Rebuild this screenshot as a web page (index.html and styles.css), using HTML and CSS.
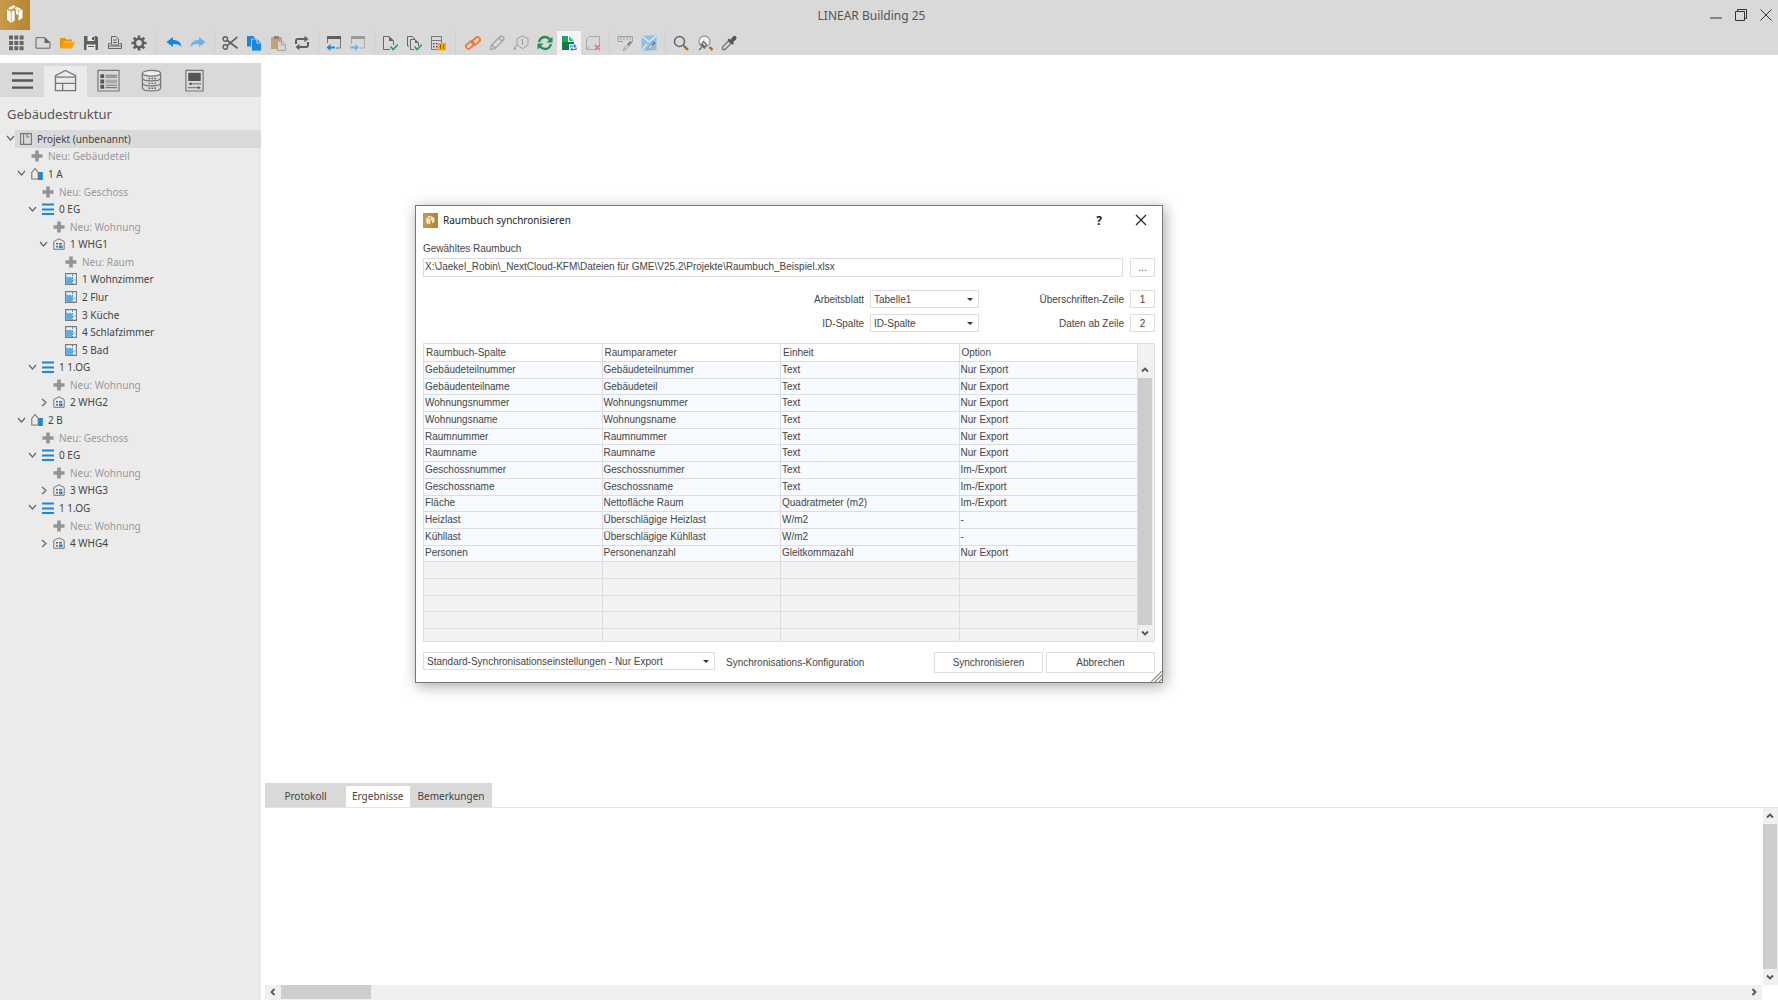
FILE: index.html
```html
<!DOCTYPE html>
<html lang="de">
<head>
    <meta charset="utf-8">
    <title>LINEAR Building 25</title>
    <link rel="stylesheet" href="styles.css">
</head>
<body>
    <svg class="symbols" aria-hidden="true">
        <symbol id="logo" viewBox="0 0 30 30">
            <path d="M7 9.500l3.800 2v11.500l-3.800-3.500z M11.600 11.500l3-1.200v10l-3 2.700z M8 8.300l5.500-3 2.500 1.300-5 3.400z M14.500 8.500l2.500-1.500 4.500 2-3 1.800z M18.500 11.500l4-2.200v8.700l-4 2.500z M16 9.800l2 1.200v4l-2-1z" fill="#fff"/>
        </symbol>
        <symbol id="down" viewBox="0 0 9 9"><path d="M1 2l3.500 4L8 2" fill="none" stroke="#666" stroke-width="1.2"/></symbol>
        <symbol id="right" viewBox="0 0 9 9"><path d="M3 1l4 3.500L3 8" fill="none" stroke="#666" stroke-width="1.2"/></symbol>
        <symbol id="plus" viewBox="0 0 12 12"><path d="M4.200.500h3.600v3.700H11.500v3.600H7.800v3.700H4.200V7.800H.5V4.200h3.700z" fill="#949494"/></symbol>
        <symbol id="project" viewBox="0 0 12 12"><path d="M.6.600h3v10.800h-3z M3.600.600h7.800v10.800H3.600 M7 .6v3.400h2.500" fill="none" stroke="#777" stroke-width="1.100"/></symbol>
        <symbol id="building" viewBox="0 0 12 12"><path d="M7 4h4.800v8H7z" fill="#1787e0"/><path d="M.8 11V4.500l3.200-4 3.200 4V11z" fill="#ebebeb" stroke="#777" stroke-width="1.100"/></symbol>
        <symbol id="floor" viewBox="0 0 12 12"><path d="M0 1.500h12M0 6.500h12M0 11h12" stroke="#1787e0" stroke-width="1.800"/></symbol>
        <symbol id="flat" viewBox="0 0 12 12"><path d="M.8 11.300V3.500L6 .8l5.200 2.700v7.800z" fill="none" stroke="#777"/><path d="M3 5h2v1.500H3zM6 5h3v1.500H6zM3 8h2v1.500H3z" fill="#666"/><path d="M6 7.500h3.500v2.700H6z" fill="#1787e0"/></symbol>
        <symbol id="room" viewBox="0 0 12 12"><path d="M.6.600h10.800v10.800H.6z" fill="#f3f6f8" stroke="#777" stroke-width="1.100"/><path d="M1.200 4.500h6v6.300h-6z" fill="#58aaec"/><path d="M7.500 1v10M1 4.300h6.500M7.500 7H11" stroke="#3b9bea" stroke-dasharray="2 1"/></symbol>
        <symbol id="arrow-up" viewBox="0 0 8 8"><path d="M1 5.500l3-3 3 3" fill="none" stroke="#555" stroke-width="1.800"/></symbol>
        <symbol id="arrow-down" viewBox="0 0 8 8"><path d="M1 2.500l3 3 3-3" fill="none" stroke="#555" stroke-width="1.800"/></symbol>
        <symbol id="arrow-left" viewBox="0 0 8 8"><path d="M5.500 1l-3 3 3 3" fill="none" stroke="#555" stroke-width="1.800"/></symbol>
        <symbol id="arrow-right" viewBox="0 0 8 8"><path d="M2.500 1l3 3-3 3" fill="none" stroke="#555" stroke-width="1.800"/></symbol>
    </svg>

    <header>
        <div class="titlebar">
            <svg class="logo"><use href="#logo"/></svg>
            <h1>LINEAR Building 25</h1>
            <button aria-label="Minimieren"><svg viewBox="0 0 12 12"><path d="M0 9h12" stroke="#333"/></svg></button>
            <button aria-label="Wiederherstellen"><svg viewBox="0 0 12 12"><path d="M.5 2.500h9v9h-9z M2.500 2.500v-2h9v9h-2" fill="none" stroke="#333"/></svg></button>
            <button aria-label="Schließen"><svg viewBox="0 0 12 12"><path d="M.5.500l11 11M11.500.500l-11 11" stroke="#333"/></svg></button>
        </div>
        <div class="toolbar">
            <button class="menu" aria-label="Menü"><svg viewBox="0 0 16 16"><path d="M1 .500h4v4H1zM6.300.500h4v4h-4zM11.600.500h4v4h-4zM1 5.900h4v4H1zM6.300 5.900h4v4h-4zM11.600 5.900h4v4h-4zM1 11.300h4v4H1zM6.300 11.300h4v4h-4zM11.600 11.300h4v4h-4z" fill="#666"/></svg></button>
            <button aria-label="Neu"><svg viewBox="0 0 16 16"><path d="M1 2.700h9l5 5v5.500H1z" fill="none" stroke="#666"/><path d="M9.500 2.200L15.500 8h-6z" fill="#666"/></svg></button>
            <button aria-label="Öffnen"><svg viewBox="0 0 16 16"><path d="M1 13V3h5l1.500 1.500H13V6.500H5L2.500 13z" fill="#f29100"/><path d="M1.500 13.500L5.300 7.300H16l-3.200 6.200z" fill="#ffa200"/></svg></button>
            <button aria-label="Speichern"><svg viewBox="0 0 16 16"><path d="M1 1h12.500L15 2.500V15H1z" fill="#5f5f5f"/><path d="M4.500 1h7v5h-7zM3.500 9.500h9V15h-9z" fill="#e8e8e8"/><path d="M9 2h2v3H9zM5 11h6v1H5z" fill="#5f5f5f"/></svg></button>
            <button aria-label="Drucken"><svg viewBox="0 0 16 16"><path d="M4.500 10V1.500H9L11.500 4v6z M6 5h4M6 7.500h4 M3.500 8.500h-2v5h13v-5h-2 M2 11h12" fill="none" stroke="#666"/></svg></button>
            <button aria-label="Einstellungen"><svg viewBox="0 0 16 16"><circle cx="8" cy="8" r="4.200" fill="none" stroke="#5f5f5f" stroke-width="2.600"/><path d="M8 .500v3M8 12.500v3M.5 8h3M12.500 8h3M2.700 2.700l2 2M11.300 11.300l2 2M2.700 13.300l2-2M11.300 4.700l2-2" stroke="#5f5f5f" stroke-width="2.600"/></svg></button>
            <span class="sep wide"></span>
            <button aria-label="Rückgängig"><svg viewBox="0 0 16 16"><path d="M.5 7L7 2v3c5 0 8 2 8.500 7C13 9 11 8.700 7 9v3z" fill="#1787e0"/></svg></button>
            <button aria-label="Wiederholen"><svg viewBox="0 0 16 16"><path d="M15.500 7L9 2v3C4 5 1 7 .5 12 3 9 5 8.700 9 9v3z" fill="#6db2e8"/></svg></button>
            <span class="sep"></span>
            <button aria-label="Ausschneiden"><svg viewBox="0 0 16 16"><circle cx="3.300" cy="4" r="2.200" fill="none" stroke="#5f5f5f" stroke-width="1.400"/><circle cx="3.300" cy="12" r="2.200" fill="none" stroke="#5f5f5f" stroke-width="1.400"/><path d="M5 5.200l10.500 8M5 10.800l10.500-9" stroke="#5f5f5f" stroke-width="1.700"/></svg></button>
            <button aria-label="Kopieren"><svg viewBox="0 0 16 16"><path d="M1 1h6l3 3v7.500H1z" fill="#1787e0"/><path d="M5.500 4h6L15.500 8v8h-10z" fill="#1787e0" stroke="#d9d9d9" stroke-width=".8"/><path d="M11 4v4h4" fill="none" stroke="#d9d9d9"/></svg></button>
            <button aria-label="Einfügen"><svg viewBox="0 0 16 16"><path d="M1 2h11v4H7v8H1z" fill="#c3a27c"/><path d="M4 1h5v3H4z" fill="#8e8275"/><path d="M7.500 6h4.500l3.500 3.500v6h-8z M11.500 6v4h4" fill="#d5d5d5" stroke="#a3a3a3"/></svg></button>
            <button aria-label="Aktualisieren"><svg viewBox="0 0 16 16"><path d="M2 9V6q0-2 2-2h7M14 7v3q0 2-2 2H5" fill="none" stroke="#5f5f5f" stroke-width="2"/><path d="M10.500.800l4 3.200-4 3.200zM5.500 8.800l-4 3.200 4 3.200z" fill="#5f5f5f"/></svg></button>
            <span class="sep"></span>
            <button aria-label="Fenster importieren"><svg viewBox="0 0 16 16"><path d="M1.500 8V1.500h13v11.500H10" fill="none" stroke="#777"/><path d="M1 1h14v3H1z" fill="#5f5f5f"/><path d="M.5 12.500L4.500 9v2.500H9v2H4.500V16z" fill="#1787e0"/></svg></button>
            <button aria-label="Fenster exportieren"><svg viewBox="0 0 16 16"><path d="M1.500 9V1.500h13v11.500H10" fill="none" stroke="#aaa"/><path d="M1 1h14v3H1z" fill="#999"/><path d="M9 12.500L5 9v2.500H.5v2H5V16z" fill="#6db2e8"/></svg></button>
            <span class="sep"></span>
            <button aria-label="Prüfen"><svg viewBox="0 0 16 16"><path d="M8 14.500H1.500v-13H7l4.500 4.500v4" fill="none" stroke="#666"/><path d="M7 1v5h5z" fill="#666"/><path d="M8.500 11.500l2.500 3 5-5" fill="none" stroke="#21a84f" stroke-width="1.700"/></svg></button>
            <button aria-label="Alle prüfen"><svg viewBox="0 0 16 16"><path d="M3 11H1.500V1.500H6L9 4 M8 14.500H4.500v-10H9l3.500 3.500v3" fill="none" stroke="#666"/><path d="M9 4.500V8h3.500z" fill="#666"/><path d="M8.500 11.500l2.500 3 5-5" fill="none" stroke="#21a84f" stroke-width="1.700"/></svg></button>
            <button aria-label="Berechnung anhalten"><svg viewBox="0 0 16 16"><path d="M1.500 1.500h10v13h-10z M1.500 5.500h10" fill="none" stroke="#777"/><path d="M3 8h1.500v1.500H3zM6 8h1.500v1.500H6zM3 11h1.500v1.500H3zM6 11h1.500v1.500H6z" fill="#555"/><path d="M8 8h8v7.500H8z" fill="#ffa800"/><path d="M10.500 9.500v4.500M13.500 9.500v4.500" stroke="#8b5a00"/></svg></button>
            <span class="sep wide"></span>
            <button aria-label="Verknüpfen"><svg viewBox="0 0 16 16"><g fill="none" stroke="#f07a35" stroke-width="1.800"><rect x="6.500" y="3.500" width="9" height="5" rx="2.500" transform="rotate(-42 11 6)"/><rect x=".5" y="7.500" width="9" height="5" rx="2.500" transform="rotate(-42 5 10)"/></g></svg></button>
            <button aria-label="Bearbeiten"><svg viewBox="0 0 16 16"><path d="M1.500 14.500l1-4.500 8.500-8.500q1-1 2.200 0l1.300 1.300q1 1 0 2L6 13.500z M3 10l3 3 M10 3l3 3" fill="none" stroke="#a0a0a0" stroke-width="1.200"/></svg></button>
            <button aria-label="Nummerieren"><svg viewBox="0 0 16 16"><path d="M9.500.800l5.500 3v6l-5.500 4-5.500-4v-6z M4 9.500l-2.500 4 M9.500 4v6M8 5.500L9.500 4" fill="none" stroke="#a0a0a0"/><circle cx="1.800" cy="13.500" r="1.200" fill="#a0a0a0"/></svg></button>
            <button aria-label="Synchronisieren"><svg viewBox="0 0 16 16"><path d="M2 7q1.500-5 6-5 3 0 5 2.500M14 9q-1.500 5-6 5-3 0-5-2.500" fill="none" stroke="#1c9150" stroke-width="2.300"/><path d="M15.500 1.500V7.500H9.500zM.5 14.500V8.500h6z" fill="#1c9150"/></svg></button>
            <button class="active" aria-label="Raumbuch synchronisieren"><svg viewBox="0 0 16 16"><path d="M1 1h6v6h6v8H1z" fill="#107c41"/><path d="M1 1h6v6H1z" fill="#21a366"/><path d="M8 1l5 5H8z" fill="#33c481"/><path d="M8 9h8v7H8z" fill="#f4f4f4"/><path d="M9.500 12.500v-1.500h4M15 12.500v2h-4" fill="none" stroke="#1787e0" stroke-width="1.200"/><path d="M13 9l2.500 2-2.500 2zM11.500 12.500l-2.500 2 2.500 1.500z" fill="#1787e0"/></svg></button>
            <button aria-label="Raum löschen"><svg viewBox="0 0 16 16"><path d="M1.500 4.500l3-3h10v9 M1.500 4.500v10h8 M1.500 14.500l3-3" fill="none" stroke="#a8a8a8"/><path d="M10 10l5 5M15 10l-5 5" stroke="#ee7777" stroke-width="1.800"/></svg></button>
            <span class="sep"></span>
            <button aria-label="Messen"><svg viewBox="0 0 16 16"><path d="M6 6.500H1v-5h14.500v5H13 M4 2v3M7 2v3M10 2v3M13 2v3" fill="none" stroke="#a0a0a0"/><path d="M6.500 15.500l1-3 3-3 1.500 1.500-3 3z" fill="#ddd" stroke="#999"/><path d="M10 9l3-3 2 2-3 3z" fill="#888"/></svg></button>
            <button aria-label="Fläche aufnehmen"><svg viewBox="0 0 16 16"><path d="M.5.500h15v15H.5z" fill="#8fc1e6"/><path d="M1 1l7 6 7-6M1 15l5-6" fill="none" stroke="#e6eef5" stroke-width="1.300"/><path d="M6.500 15.500l1-3 3-3 1.500 1.500-3 3z" fill="#ddd" stroke="#999"/><path d="M10 9l3-3 2 2-3 3z" fill="#888"/></svg></button>
            <span class="sep"></span>
            <button aria-label="Suchen"><svg viewBox="0 0 16 16"><circle cx="6.500" cy="6.500" r="5" fill="none" stroke="#666" stroke-width="1.500"/><path d="M10 10l2 2" stroke="#666" stroke-width="1.500"/><path d="M11.300 11.300l3.700 3.700" stroke="#a8691f" stroke-width="2.400"/></svg></button>
            <button aria-label="Filtern"><svg viewBox="0 0 16 16"><circle cx="7.500" cy="6.500" r="5.500" fill="#eee" stroke="#999" stroke-width="1.300"/><path d="M2 15l3-3M3.500 9l4.500 4.500M5 9l1.500-2.500 3 3L7.500 12z" fill="#ddd" stroke="#666" stroke-width="1.200"/><path d="M12.500 12l3 3" stroke="#a8691f" stroke-width="2.400"/></svg></button>
            <button aria-label="Pipette"><svg viewBox="0 0 16 16"><path d="M1.500 14.500v-2.500l6-6 2.500 2.500-6 6z" fill="none" stroke="#777" stroke-width="1.300"/><path d="M6.500 5l1.500-1.500 1.500 1.200L12 1.500q2-1.500 3 0t0 3L12 7l1 1.300-1.500 1.500z" fill="#555"/></svg></button>
        </div>
    </header>

    <main>
        <aside>
            <div class="side-tabs">
                <button aria-label="Navigation"><svg viewBox="0 0 24 24"><path d="M1 4.500h22M1 12h22M1 19.500h22" stroke="#555" stroke-width="2.400"/></svg></button>
                <button class="active" aria-label="Gebäudestruktur"><svg viewBox="0 0 24 24"><path d="M1.500 22.500V7L12 1.500 22.500 7v15.500z M1.500 8.500h21M1.500 15h21M9 15v7.500" fill="none" stroke="#777" stroke-width="1.400"/></svg></button>
                <button aria-label="Liste"><svg viewBox="0 0 24 24"><path d="M1 1.500h22v21.500H1z M9 6.500h12M9 8.500h12M9 17h12M9 19.500h12" fill="none" stroke="#777" stroke-width="1.200"/><path d="M3.500 5.500h4v4h-4zM3.500 11h4v4h-4zM3.500 16.500h4v4h-4z" fill="#555"/><path d="M9 11h12v4H9z" fill="#aaa"/></svg></button>
                <button aria-label="Datenbank"><svg viewBox="0 0 24 24"><path d="M2.500 4.500v15c0 4.500 19 4.500 19 0v-15M2.500 9.500c0 4 19 4 19 0M2.500 14.500c0 4 19 4 19 0" fill="none" stroke="#777" stroke-width="1.300"/><ellipse cx="12" cy="4.500" rx="9.500" ry="3" fill="#eee" stroke="#777" stroke-width="1.300"/><path d="M9 10h1.500M12 10h1.500M15 10h1.500M9 15h1.500M12 15h1.500M15 15h1.500M9 20h1.500M12 20h1.500M15 20h1.500" stroke="#555" stroke-width="1.500"/></svg></button>
                <button aria-label="Bericht"><svg viewBox="0 0 24 24"><path d="M3 1.500h18v21.500H3z" fill="none" stroke="#777" stroke-width="1.200"/><path d="M5.500 4h13v8.500h-13z" fill="#555"/><path d="M6 15.500h13M5 19.500h13" stroke="#666"/><path d="M9 13.800v3.400l-3-1.700zM15.500 17.800v3.400l3-1.700z" fill="#555"/></svg></button>
            </div>
            <h2>Gebäudestruktur</h2>
            <ul class="tree">
                <li class="selected"><svg class="toggle"><use href="#down"/></svg><span><svg><use href="#project"/></svg>Projekt (unbenannt)</span></li>
                <li class="l1 new"><span><svg><use href="#plus"/></svg>Neu: Gebäudeteil</span></li>
                <li class="l1"><svg class="toggle"><use href="#down"/></svg><span><svg><use href="#building"/></svg>1 A</span></li>
                <li class="l2 new"><span><svg><use href="#plus"/></svg>Neu: Geschoss</span></li>
                <li class="l2"><svg class="toggle"><use href="#down"/></svg><span><svg><use href="#floor"/></svg>0 EG</span></li>
                <li class="l3 new"><span><svg><use href="#plus"/></svg>Neu: Wohnung</span></li>
                <li class="l3"><svg class="toggle"><use href="#down"/></svg><span><svg><use href="#flat"/></svg>1 WHG1</span></li>
                <li class="l4 new"><span><svg><use href="#plus"/></svg>Neu: Raum</span></li>
                <li class="l4"><span><svg><use href="#room"/></svg>1 Wohnzimmer</span></li>
                <li class="l4"><span><svg><use href="#room"/></svg>2 Flur</span></li>
                <li class="l4"><span><svg><use href="#room"/></svg>3 Küche</span></li>
                <li class="l4"><span><svg><use href="#room"/></svg>4 Schlafzimmer</span></li>
                <li class="l4"><span><svg><use href="#room"/></svg>5 Bad</span></li>
                <li class="l2"><svg class="toggle"><use href="#down"/></svg><span><svg><use href="#floor"/></svg>1 1.OG</span></li>
                <li class="l3 new"><span><svg><use href="#plus"/></svg>Neu: Wohnung</span></li>
                <li class="l3"><svg class="toggle"><use href="#right"/></svg><span><svg><use href="#flat"/></svg>2 WHG2</span></li>
                <li class="l1"><svg class="toggle"><use href="#down"/></svg><span><svg><use href="#building"/></svg>2 B</span></li>
                <li class="l2 new"><span><svg><use href="#plus"/></svg>Neu: Geschoss</span></li>
                <li class="l2"><svg class="toggle"><use href="#down"/></svg><span><svg><use href="#floor"/></svg>0 EG</span></li>
                <li class="l3 new"><span><svg><use href="#plus"/></svg>Neu: Wohnung</span></li>
                <li class="l3"><svg class="toggle"><use href="#right"/></svg><span><svg><use href="#flat"/></svg>3 WHG3</span></li>
                <li class="l2"><svg class="toggle"><use href="#down"/></svg><span><svg><use href="#floor"/></svg>1 1.OG</span></li>
                <li class="l3 new"><span><svg><use href="#plus"/></svg>Neu: Wohnung</span></li>
                <li class="l3"><svg class="toggle"><use href="#right"/></svg><span><svg><use href="#flat"/></svg>4 WHG4</span></li>
            </ul>
        </aside>

        <div class="workspace">
            <div class="canvas"></div>
            <div class="results">
                <div class="tabs">
                    <button>Protokoll</button>
                    <button class="active">Ergebnisse</button>
                    <button>Bemerkungen</button>
                </div>
                <div class="output">
                    <div class="output-text"></div>
                    <div class="vscroll">
                        <svg><use href="#arrow-up"/></svg>
                        <div class="thumb"></div>
                        <svg><use href="#arrow-down"/></svg>
                    </div>
                </div>
                <div class="hscroll">
                    <svg><use href="#arrow-left"/></svg>
                    <div class="thumb"></div>
                    <svg><use href="#arrow-right"/></svg>
                </div>
            </div>
        </div>
    </main>

    <section class="dialog" role="dialog" aria-labelledby="dialog-title">
        <div class="dialog-title">
            <svg class="logo"><use href="#logo"/></svg>
            <h2 id="dialog-title">Raumbuch synchronisieren</h2>
            <button aria-label="Hilfe">?</button>
            <button aria-label="Schließen"><svg viewBox="0 0 12 12"><path d="M1 1l10 10M11 1L1 11" stroke="#222" stroke-width="1.200"/></svg></button>
        </div>
        <form class="dialog-body">
            <label class="file-label" for="file">Gewähltes Raumbuch</label>
            <div class="file-row">
                <input id="file" type="text" value="X:\Jaekel_Robin\_NextCloud-KFM\Dateien für GME\V25.2\Projekte\Raumbuch_Beispiel.xlsx">
                <button type="button">...</button>
            </div>
            <div class="options">
                <label for="sheet">Arbeitsblatt</label>
                <div class="select"><select id="sheet"><option>Tabelle1</option></select></div>
                <label for="head-row">Überschriften-Zeile</label>
                <input id="head-row" type="text" value="1">
                <label for="id-column">ID-Spalte</label>
                <div class="select"><select id="id-column"><option>ID-Spalte</option></select></div>
                <label for="data-row">Daten ab Zeile</label>
                <input id="data-row" type="text" value="2">
            </div>
            <div class="grid">
                <table>
                    <thead>
                        <tr><th>Raumbuch-Spalte</th><th>Raumparameter</th><th>Einheit</th><th>Option</th></tr>
                    </thead>
                    <tbody>
                        <tr><td>Gebäudeteilnummer</td><td>Gebäudeteilnummer</td><td>Text</td><td>Nur Export</td></tr>
                        <tr><td>Gebäudenteilname</td><td>Gebäudeteil</td><td>Text</td><td>Nur Export</td></tr>
                        <tr><td>Wohnungsnummer</td><td>Wohnungsnummer</td><td>Text</td><td>Nur Export</td></tr>
                        <tr><td>Wohnungsname</td><td>Wohnungsname</td><td>Text</td><td>Nur Export</td></tr>
                        <tr><td>Raumnummer</td><td>Raumnummer</td><td>Text</td><td>Nur Export</td></tr>
                        <tr><td>Raumname</td><td>Raumname</td><td>Text</td><td>Nur Export</td></tr>
                        <tr><td>Geschossnummer</td><td>Geschossnummer</td><td>Text</td><td>Im-/Export</td></tr>
                        <tr><td>Geschossname</td><td>Geschossname</td><td>Text</td><td>Im-/Export</td></tr>
                        <tr><td>Fläche</td><td>Nettofläche Raum</td><td>Quadratmeter (m2)</td><td>Im-/Export</td></tr>
                        <tr><td>Heizlast</td><td>Überschlägige Heizlast</td><td>W/m2</td><td>-</td></tr>
                        <tr><td>Kühllast</td><td>Überschlägige Kühllast</td><td>W/m2</td><td>-</td></tr>
                        <tr><td>Personen</td><td>Personenanzahl</td><td>Gleitkommazahl</td><td>Nur Export</td></tr>
                        <tr class="empty"><td>&nbsp;</td><td></td><td></td><td></td></tr>
                        <tr class="empty"><td>&nbsp;</td><td></td><td></td><td></td></tr>
                        <tr class="empty"><td>&nbsp;</td><td></td><td></td><td></td></tr>
                        <tr class="empty"><td>&nbsp;</td><td></td><td></td><td></td></tr>
                        <tr class="empty last"><td></td><td></td><td></td><td></td></tr>
                    </tbody>
                </table>
                <div class="vscroll">
                    <svg><use href="#arrow-up"/></svg>
                    <div class="thumb"></div>
                    <svg><use href="#arrow-down"/></svg>
                </div>
            </div>
            <div class="footer">
                <div class="select"><select id="config"><option>Standard-Synchronisationseinstellungen - Nur Export</option></select></div>
                <label for="config">Synchronisations-Konfiguration</label>
                <button type="button">Synchronisieren</button>
                <button type="button">Abbrechen</button>
            </div>
        </form>
        <svg class="grip" viewBox="0 0 11 11"><path d="M0 11L11 0M4 11l7-7M8 11l3-3" stroke="#8a8a78" stroke-width="1.200"/></svg>
    </section>
</body>
</html>
```
FILE: styles.css
```css
* {
    box-sizing: border-box;
}
body {
    display: flex;
    flex-direction: column;
    margin: 0;
    height: 100vh;
    overflow: hidden;
    font-family: "Noto Sans", "Open Sans", sans-serif;
    font-size: 10px;
    color: #444;
    background: #fff;
}
button {
    margin: 0;
    padding: 0;
    border: none;
    background: none;
    font: inherit;
    color: inherit;
}
h1, h2 {
    margin: 0;
    font-weight: normal;
}
svg {
    display: block;
    flex: none;
}
.symbols {
    display: none;
}
.logo {
    background: linear-gradient(90deg, #c99a4c, #b5852f);
}

/* title bar and toolbar */
header {
    background: #d9d9d9;
}
.titlebar {
    display: flex;
    align-items: center;
    height: 30px;
}
.titlebar .logo {
    width: 30px;
    height: 30px;
}
.titlebar h1 {
    flex: 1;
    padding-left: 10px;
    text-align: center;
    font-size: 12px;
    color: #555;
}
.titlebar button {
    display: grid;
    place-items: center;
    width: 25px;
    height: 30px;
}
.titlebar button svg {
    width: 12px;
    height: 12px;
}
.toolbar {
    display: flex;
    align-items: center;
    padding-left: 4px;
    height: 25px;
}
.toolbar button {
    display: grid;
    place-items: center;
    width: 24px;
    height: 24px;
}
.toolbar .menu {
    margin-right: 3px;
}
.toolbar .active {
    background: #f4f4f4;
}
.toolbar svg {
    width: 16px;
    height: 16px;
}
.sep {
    margin: 0 3px 0 4px;
    width: 1px;
    height: 23px;
    background: #cfcfcf;
}
.sep.wide {
    margin: 0 5px;
}

/* sidebar */
main {
    display: flex;
    flex: 1;
    padding-top: 8px;
    min-height: 0;
}
aside {
    flex: none;
    width: 261px;
    background: #ebebeb;
}
.side-tabs {
    display: flex;
    padding-left: 1px;
    background: #d9d9d9;
}
.side-tabs button {
    display: grid;
    place-items: center;
    width: 43px;
    height: 34px;
}
.side-tabs .active {
    background: #ebebeb;
    box-shadow: inset 0 3px #d9d9d9;
}
.side-tabs svg {
    width: 23px;
    height: 23px;
}
aside h2 {
    padding: 8px 7px 6px;
    font-size: 13px;
    line-height: 19px;
    color: #555;
}
.tree {
    display: flex;
    flex-direction: column;
    margin: 0;
    padding: 0;
    height: 422px;
    list-style: none;
}
.tree li {
    display: flex;
    flex: 1;
    align-items: center;
    padding-left: 15px;
}
.tree .l1 {
    padding-left: 26px;
}
.tree .l2 {
    padding-left: 37px;
}
.tree .l3 {
    padding-left: 48px;
}
.tree .l4 {
    padding-left: 60px;
}
.tree span {
    display: flex;
    flex: 1;
    align-items: center;
    gap: 5px;
    padding-left: 5px;
    height: 100%;
}
.tree span svg {
    width: 12px;
    height: 12px;
}
.tree .toggle {
    margin-left: -9px;
    width: 9px;
    height: 9px;
}
.tree .new {
    color: #999;
}
.tree .selected span {
    background: #d9d9d9;
}

/* work area */
.workspace {
    display: flex;
    flex: 1;
    flex-direction: column;
    padding-left: 4px;
    min-width: 0;
}
.canvas {
    flex: 1;
}
.tabs {
    display: flex;
    border-bottom: 1px solid #e4e4e4;
}
.tabs button {
    padding: 2px 8px 0;
    height: 24px;
    background: #d9d9d9;
}
.tabs button:first-child {
    width: 81px;
}
.tabs .active {
    padding: 2px 6px 0;
    background: #fff;
    box-shadow: inset 0 3px #d9d9d9;
}
.output {
    display: flex;
    height: 177px;
}
.output-text {
    flex: 1;
}
.vscroll {
    display: flex;
    flex-direction: column;
    width: 15px;
    background: #f0f0f0;
}
.vscroll .thumb {
    flex: 1;
    width: 14px;
    background: #cdcdcd;
}
.vscroll svg {
    margin: 4px 3px;
    width: 8px;
    height: 8px;
}
.hscroll {
    display: flex;
    margin-right: 16px;
    height: 15px;
    background: #f0f0f0;
}
.hscroll svg {
    margin: 3px 4px;
    width: 8px;
    height: 8px;
}
.hscroll .thumb {
    margin-right: auto;
    width: 90px;
    height: 14px;
    background: #cdcdcd;
}

/* dialog */
.dialog {
    position: absolute;
    top: 205px;
    left: 415px;
    width: 748px;
    border: 1px solid #777;
    background: #fff;
    box-shadow: 2px 3px 14px rgba(0, 0, 0, 0.35);
    font-family: "Liberation Sans", Arial, sans-serif;
}
.dialog-title {
    display: flex;
    align-items: center;
    padding-left: 7px;
    height: 28px;
    font-family: "Noto Sans", sans-serif;
    color: #222;
}
.dialog-title .logo {
    width: 15px;
    height: 15px;
}
.dialog-title h2 {
    flex: 1;
    padding-left: 5px;
    font-size: 10px;
}
.dialog-title button {
    display: grid;
    place-items: center;
    width: 42px;
    height: 28px;
    font-size: 12px;
    font-weight: bold;
}
.dialog-title button svg {
    width: 12px;
    height: 12px;
}
.dialog-body {
    padding: 8px 7px 9px;
}
.dialog input,
.dialog select,
.file-row button,
.footer button {
    border: 1px solid #ddd;
    border-radius: 0;
    background: #fff;
    font: inherit;
    color: inherit;
}
.file-label {
    display: block;
    padding-bottom: 2px;
    line-height: 14px;
}
.file-row {
    display: flex;
    gap: 7px;
}
.file-row input {
    flex: 1;
    padding: 0 1px 2px;
    height: 19px;
}
.file-row button {
    width: 25px;
}
.options {
    display: grid;
    grid-template-columns: 1fr 109px 141px 25px;
    gap: 6px 5px;
    align-items: center;
    margin: 13px 0 11px;
    text-align: right;
}
.options label {
    padding-right: 1px;
}
.options input {
    padding: 0;
    width: 25px;
    height: 18px;
    text-align: center;
}
.select {
    position: relative;
}
.select select {
    display: block;
    padding: 0 3px;
    width: 100%;
    height: 18px;
    appearance: none;
}
.select::after {
    content: "";
    position: absolute;
    top: 8px;
    right: 6px;
    border: 3px solid transparent;
    border-top-color: #333;
    border-bottom: none;
}
.grid {
    display: flex;
    border: 1px solid #ddd;
    background: #f2f2f2;
}
.grid table {
    flex: 1;
    width: 100%;
    height: 297px;
    table-layout: fixed;
    border-spacing: 0;
}
.grid th,
.grid td {
    padding: 0;
    border-right: 1px solid #ddd;
    border-bottom: 1px solid #ddd;
    line-height: 12px;
    text-align: left;
    font-weight: normal;
}
.grid th {
    padding-left: 2px;
    height: 18px;
    background: #fff;
}
.grid td {
    padding-left: 1px;
    background: #f7fbff;
}
.grid .empty td {
    background: #f2f2f2;
}
.grid .last td {
    height: 12px;
    border-bottom: none;
}
.grid .vscroll {
    margin-top: 18px;
    width: 16px;
}
.footer {
    display: flex;
    align-items: center;
    gap: 3px;
    margin-top: 10px;
}
.footer .select {
    align-self: flex-start;
    width: 292px;
}
.footer label {
    flex: 1;
    padding-left: 8px;
}
.footer button {
    width: 109px;
    height: 21px;
}
.grip {
    position: absolute;
    right: 0;
    bottom: 0;
    width: 11px;
    height: 11px;
}
```
